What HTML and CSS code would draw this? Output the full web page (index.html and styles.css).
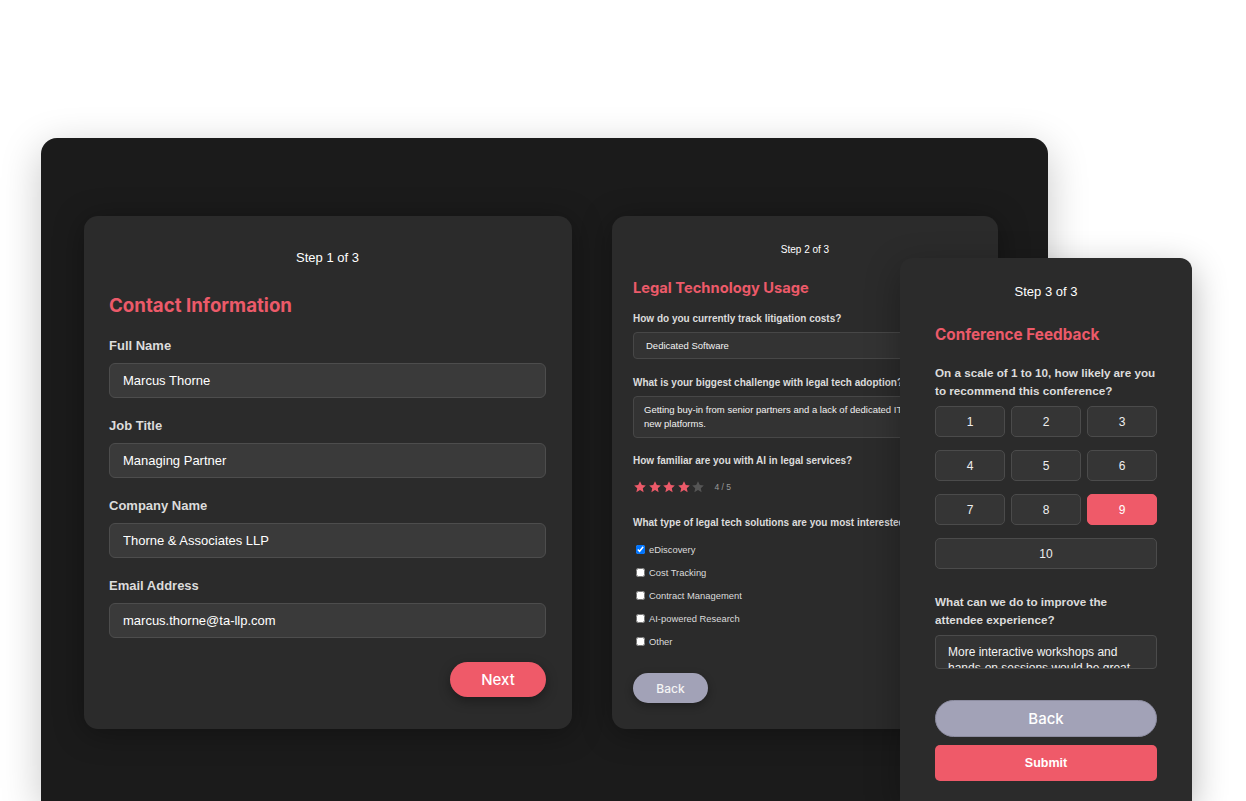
FILE: index.html
```html
<!DOCTYPE html>
<html lang="en">
<head>
  <meta charset="UTF-8">
  <meta name="viewport" content="width=device-width, initial-scale=1.0">
  <title>Conference Survey</title>
  <link rel="stylesheet" href="styles.css">
</head>
<body>
  <div class="stage">
    <div class="panel">

      <!-- Step 1 -->
      <section class="card card-contact">
        <div class="step">Step 1 of 3</div>
        <h2 class="title">Contact Information</h2>
        <div class="field">
          <label>Full Name</label>
          <input type="text" value="Marcus Thorne">
        </div>
        <div class="field">
          <label>Job Title</label>
          <input type="text" value="Managing Partner">
        </div>
        <div class="field">
          <label>Company Name</label>
          <input type="text" value="Thorne &amp; Associates LLP">
        </div>
        <div class="field">
          <label>Email Address</label>
          <input type="text" value="marcus.thorne@ta-llp.com">
        </div>
        <div class="actions">
          <button type="button" class="btn-next">Next</button>
        </div>
      </section>

      <!-- Step 2 -->
      <section class="card card-legal">
        <div class="step">Step 2 of 3</div>
        <h2 class="title">Legal Technology Usage</h2>
        <div class="q">
          <label>How do you currently track litigation costs?</label>
          <div class="select-box">Dedicated Software</div>
        </div>
        <div class="q">
          <label>What is your biggest challenge with legal tech adoption?</label>
          <textarea class="area">Getting buy-in from senior partners and a lack of dedicated IT support for
new platforms.</textarea>
        </div>
        <div class="q">
          <label>How familiar are you with AI in legal services?</label>
          <div class="stars">
            <svg viewBox="0 0 24 24" class="on"><polygon points="12,2 15.1,8.6 22,9.3 16.8,14 18.2,21 12,17.3 5.8,21 7.2,14 2,9.3 8.9,8.6"/></svg>
            <svg viewBox="0 0 24 24" class="on"><polygon points="12,2 15.1,8.6 22,9.3 16.8,14 18.2,21 12,17.3 5.8,21 7.2,14 2,9.3 8.9,8.6"/></svg>
            <svg viewBox="0 0 24 24" class="on"><polygon points="12,2 15.1,8.6 22,9.3 16.8,14 18.2,21 12,17.3 5.8,21 7.2,14 2,9.3 8.9,8.6"/></svg>
            <svg viewBox="0 0 24 24" class="on"><polygon points="12,2 15.1,8.6 22,9.3 16.8,14 18.2,21 12,17.3 5.8,21 7.2,14 2,9.3 8.9,8.6"/></svg>
            <svg viewBox="0 0 24 24"><polygon points="12,2 15.1,8.6 22,9.3 16.8,14 18.2,21 12,17.3 5.8,21 7.2,14 2,9.3 8.9,8.6"/></svg>
            <span class="score">4 / 5</span>
          </div>
        </div>
        <div class="q q-checks">
          <label>What type of legal tech solutions are you most interested in?</label>
          <ul class="checks">
            <li><input type="checkbox" checked><span>eDiscovery</span></li>
            <li><input type="checkbox"><span>Cost Tracking</span></li>
            <li><input type="checkbox"><span>Contract Management</span></li>
            <li><input type="checkbox"><span>AI-powered Research</span></li>
            <li><input type="checkbox"><span>Other</span></li>
          </ul>
        </div>
        <button type="button" class="btn-back-sm">Back</button>
      </section>
    </div>

    <!-- Step 3 (floating window) -->
    <section class="card card-feedback">
      <div class="step">Step 3 of 3</div>
      <h2 class="title">Conference Feedback</h2>
      <label class="q-label">On a scale of 1 to 10, how likely are you to recommend this conference?</label>
      <div class="scale">
        <button type="button">1</button>
        <button type="button">2</button>
        <button type="button">3</button>
        <button type="button">4</button>
        <button type="button">5</button>
        <button type="button">6</button>
        <button type="button">7</button>
        <button type="button">8</button>
        <button type="button" class="selected">9</button>
        <button type="button" class="wide">10</button>
      </div>
      <label class="q-label q-gap">What can we do to improve the attendee experience?</label>
      <textarea class="area area-lg">More interactive workshops and hands-on sessions would be great.</textarea>
      <button type="button" class="btn-back">Back</button>
      <button type="button" class="btn-submit">Submit</button>
    </section>
  </div>
</body>
</html>
```

FILE: styles.css
```css
* {
  box-sizing: border-box;
}

html, body {
  margin: 0;
  height: 100%;
  overflow: hidden;
}

body {
  background: #ffffff;
  font-family: "Liberation Sans", Arial, sans-serif;
  color: #ffffff;
}

/* Contenitore */
.stage {
  position: relative;
  height: 801px;
  padding: 138px 0 0 41px;
}

.panel {
  width: 1007px;
  height: 663px;
  background: #1b1b1b;
  border-radius: 16px 16px 0 0;
  box-shadow: 0 10px 40px rgba(0, 0, 0, 0.22);
  display: flex;
  align-items: flex-start;
  gap: 40px;
  padding: 78px 0 0 43px;
}

.card {
  background: #2b2b2b;
  border-radius: 14px;
  box-shadow: 0 4px 30px rgba(0, 0, 0, 0.35);
}

.step {
  text-align: center;
  color: #ffffff;
}

.title {
  margin: 0;
  font-family: Inter, "Liberation Sans", sans-serif;
  font-weight: 700;
  color: #ec5a69;
}

label {
  display: block;
  font-weight: bold;
  color: #dcdcdc;
}

/* Step 1 */
.card-contact {
  width: 488px;
  padding: 33px 26px 32px 25px;
}

.card-contact .step {
  font-size: 13px;
  line-height: 18px;
}

.card-contact .title {
  font-size: 18.7px;
  line-height: 24px;
  margin: 27px 0 19px;
}

.field + .field {
  margin-top: 19px;
}

.field label {
  font-size: 13px;
  line-height: 17px;
  margin-bottom: 9px;
}

.field input {
  display: block;
  width: 100%;
  height: 35px;
  background: #3a3a3a;
  border: 1px solid #4d4d4d;
  border-radius: 6px;
  padding: 0 13px;
  color: #ffffff;
  font-family: "Liberation Sans", Arial, sans-serif;
  font-size: 13px;
  outline: none;
}

.actions {
  display: flex;
  justify-content: flex-end;
  margin-top: 24px;
}

.btn-next {
  width: 96px;
  height: 35px;
  border: none;
  border-radius: 18px;
  background: #ef5a69;
  color: #ffffff;
  font-family: Inter, "Liberation Sans", sans-serif;
  font-size: 15px;
  font-weight: 500;
  box-shadow: 0 4px 12px rgba(0, 0, 0, 0.35);
}

/* Step 2 */
.card-legal {
  width: 386px;
  padding: 27px 21px 26px;
}

.card-legal .step {
  font-size: 10px;
  line-height: 14px;
}

.card-legal .title {
  font-size: 14.7px;
  line-height: 20px;
  margin: 21px 0 14px;
}

.q + .q {
  margin-top: 16.5px;
}

.q label {
  font-size: 10px;
  line-height: 13px;
  margin-bottom: 7px;
  white-space: nowrap;
}

.select-box {
  height: 27px;
  background: #333333;
  border: 1px solid #474747;
  border-radius: 4px;
  padding: 0 12px;
  font-size: 9.5px;
  line-height: 25px;
  color: #f2f2f2;
}

.area {
  display: block;
  width: 100%;
  height: 42px;
  background: #333333;
  border: 1px solid #474747;
  border-radius: 4px;
  padding: 6px 10px;
  color: #f2f2f2;
  font-family: "Liberation Sans", Arial, sans-serif;
  font-size: 9.5px;
  line-height: 14px;
  resize: none;
  overflow: hidden;
  outline: none;
}

.q .stars {
  margin-top: 12.5px;
}

.stars {
  display: flex;
  align-items: center;
  gap: 0.5px;
  height: 14px;
}

.stars svg {
  width: 14px;
  height: 14px;
  fill: #555555;
}

.stars svg.on {
  fill: #ec5a69;
}

.score {
  margin-left: 9px;
  font-size: 8.5px;
  color: #9a9a9a;
}

.q-checks {
  margin-top: 22px !important;
}

.checks {
  list-style: none;
  margin: 9px 0 0;
  padding: 0;
}

.checks li {
  display: flex;
  align-items: center;
  height: 23px;
}

.checks input {
  width: 9px;
  height: 9px;
  margin: 0 0 0 3px;
}

.checks span {
  margin-left: 4px;
  font-size: 9.4px;
  color: #dcdcdc;
}

.btn-back-sm {
  margin-top: 20.5px;
  width: 75px;
  height: 30px;
  border: none;
  border-radius: 15px;
  background: #a2a2b7;
  color: #f4f4f4;
  font-family: Inter, "Liberation Sans", sans-serif;
  font-size: 12px;
  font-weight: 500;
  box-shadow: 0 3px 8px rgba(0, 0, 0, 0.3);
}

/* Step 3 */
.card-feedback {
  position: absolute;
  left: 900px;
  top: 258px;
  width: 292px;
  height: 543px;
  padding: 25px 35px 0;
  border-radius: 12px 12px 0 0;
  box-shadow: 0 10px 35px rgba(0, 0, 0, 0.3);
}

.card-feedback .step {
  font-size: 13px;
  line-height: 18px;
}

.card-feedback .title {
  font-size: 15.3px;
  line-height: 22px;
  margin: 23px 0 18px;
}

.q-label {
  font-size: 11.7px;
  line-height: 17.5px;
}

.q-gap {
  margin-top: 24px;
}

.scale {
  display: grid;
  grid-template-columns: repeat(3, 1fr);
  column-gap: 6px;
  row-gap: 13px;
  margin-top: 7px;
}

.scale button {
  height: 31px;
  background: #353535;
  border: 1px solid #4b4b4b;
  border-radius: 5px;
  color: #eeeeee;
  font-family: "Liberation Sans", Arial, sans-serif;
  font-size: 12px;
}

.scale .selected {
  background: #ef5a69;
  border-color: #ef5a69;
  color: #ffffff;
}

.scale .wide {
  grid-column: 1 / -1;
}

.area-lg {
  margin-top: 7px;
  height: 34px;
  padding: 8px 12px;
  font-size: 12px;
  line-height: 16px;
  border-color: #4b4b4b;
}

.btn-back {
  display: block;
  width: 100%;
  margin-top: 31px;
  height: 37px;
  border: 1px solid #8c8ca0;
  border-radius: 19px;
  background: #a2a2b7;
  color: #ffffff;
  font-family: Inter, "Liberation Sans", sans-serif;
  font-size: 15px;
  font-weight: 500;
}

.btn-submit {
  display: block;
  width: 100%;
  margin-top: 8px;
  height: 36px;
  border: none;
  border-radius: 5px;
  background: #ef5a69;
  color: #ffffff;
  font-family: "Liberation Sans", Arial, sans-serif;
  font-size: 12.5px;
  font-weight: bold;
}
```
